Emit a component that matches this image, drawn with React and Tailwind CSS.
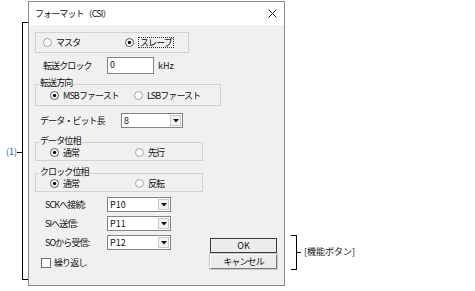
import React from "react";

function Radio({ checked }) {
  return (
    <svg width="9" height="9" viewBox="0 0 9 9" className="shrink-0">
      <circle cx="4.5" cy="4.5" r="4" fill="white" stroke={checked ? "#555" : "#a0a0a0"} strokeWidth="1" />
      {checked && <circle cx="4.5" cy="4.5" r="1.7" fill="#111" />}
    </svg>
  );
}

function RadioItem({ checked, label, focus, className = "" }) {
  return (
    <div className={"flex items-center gap-[4px] " + className}>
      <Radio checked={checked} />
      <span className={focus ? "border border-dotted border-[#333] px-[1px] leading-[9px]" : "leading-[9px]"}>{label}</span>
    </div>
  );
}

function Select({ value, className }) {
  return (
    <div className={"flex h-[15px] items-stretch border border-[#828282] bg-white " + className}>
      <span className="flex-1 pl-[2px] leading-[13px] tracking-normal">{value}</span>
      <div className="m-[1px] flex w-[11px] items-center justify-center border border-[#c8c8c8] bg-[#f3f3f3]">
        <svg width="6" height="4" viewBox="0 0 6 4">
          <path d="M0 0 H6 L3 3.5 Z" fill="#111" />
        </svg>
      </div>
    </div>
  );
}

function Group({ label, className, children }) {
  return (
    <div className={"relative border border-[#d2d2d2] " + className}>
      {label && (
        <span className="absolute -top-[7px] left-[3px] bg-[#f0f0f0] px-[1px] leading-[9px]">{label}</span>
      )}
      {children}
    </div>
  );
}

export default function App() {
  return (
    <div className="relative h-[291px] w-[475px] overflow-hidden bg-white font-['Noto_Sans_CJK_JP',sans-serif] text-[9px] tracking-[-0.9px] text-[#111]">
      {/* left bracket annotation */}
      <div className="absolute left-[22px] top-[22px] h-[258px] w-[7px] border-y border-l border-black" />
      <div className="absolute left-[17px] top-[152px] h-px w-[5px] bg-black" />
      <span className="absolute left-[6px] top-[147px] leading-[10px] tracking-normal text-[#0a5fb4]">(1)</span>

      {/* right bracket annotation */}
      <div className="absolute left-[291px] top-[235px] h-[35px] w-[6px] border-y border-r border-black" />
      <div className="absolute left-[296px] top-[252px] h-px w-[5px] bg-black" />
      <span className="absolute left-[304px] top-[247px] leading-[10px] tracking-normal text-[#111]">[機能ボタン]</span>

      {/* dialog window */}
      <div className="absolute left-[28px] top-[1px] flex h-[285px] w-[257px] flex-col border border-[#8a8a8a] bg-[#f0f0f0]">
        <div className="flex h-[23px] items-center justify-between bg-white pl-[6px] pr-[7px]">
          <span className="leading-[11px]">フォーマット（CSI）</span>
          <svg width="9" height="9" viewBox="0 0 9 9">
            <path d="M0.5 0.5 L8.5 8.5 M8.5 0.5 L0.5 8.5" stroke="#222" strokeWidth="1" />
          </svg>
        </div>

        <div className="flex flex-1 flex-col pl-[6px]">
          <Group label="" className="mt-[7px] flex h-[21px] w-[154px] items-center pl-[7px]">
            <RadioItem label="マスタ" className="w-[82px]" />
            <RadioItem checked focus label="スレーブ" />
          </Group>

          <div className="mt-[4px] flex h-[17px] items-center">
            <span className="ml-[8px] w-[64px] leading-[11px]">転送クロック</span>
            <div className="h-[17px] w-[47px] border border-[#828282] bg-white pl-[2px] leading-[14px]">0</div>
            <span className="ml-[4px] leading-[11px] tracking-normal">kHz</span>
          </div>

          <Group label="転送方向" className="mt-[10px] flex h-[22px] w-[186px] items-center pl-[14px] pt-[1px]">
            <RadioItem checked label="MSBファースト" className="w-[84px]" />
            <RadioItem label="LSBファースト" />
          </Group>

          <div className="mt-[7px] flex h-[15px] items-center">
            <span className="ml-[5px] w-[81px] leading-[11px]">データ・ビット長</span>
            <Select value="8" className="w-[62px]" />
          </div>

          <Group label="データ位相" className="mt-[14px] flex h-[19px] w-[168px] items-center pl-[14px] pt-[2px]">
            <RadioItem checked label="通常" className="w-[85px]" />
            <RadioItem label="先行" />
          </Group>

          <Group label="クロック位相" className="mt-[12px] flex h-[19px] w-[168px] items-center pl-[14px] pt-[2px]">
            <RadioItem checked label="通常" className="w-[85px]" />
            <RadioItem label="反転" />
          </Group>

          <div className="flex flex-1 items-start justify-between pr-[7px]">
            <div className="flex flex-col">
              <div className="mt-[5px] flex h-[15px] items-center">
                <span className="ml-[10px] w-[62px] leading-[11px]">SCKへ接続:</span>
                <Select value="P10" className="w-[64px]" />
              </div>
              <div className="mt-[4px] flex h-[15px] items-center">
                <span className="ml-[10px] w-[62px] leading-[11px]">SIへ送信:</span>
                <Select value="P11" className="w-[64px]" />
              </div>
              <div className="mt-[4px] flex h-[15px] items-center">
                <span className="ml-[10px] w-[62px] leading-[11px]">SOから受信:</span>
                <Select value="P12" className="w-[64px]" />
              </div>
              <div className="mt-[7px] flex items-center gap-[3px] pl-[6px]">
                <div className="h-[10px] w-[10px] border border-[#6d6d6d] bg-white" />
                <span className="leading-[11px]">繰り返し</span>
              </div>
            </div>
            <div className="mt-[46px] flex flex-col gap-[1px]">
              <div className="flex h-[15px] w-[67px] items-center justify-center border border-[#3a3a3a] bg-[#ececec] leading-[11px] tracking-normal">
                OK
              </div>
              <div className="flex h-[15px] w-[67px] items-center justify-center border border-b-[#7a7a7a] border-l-white border-r-[#7a7a7a] border-t-white bg-[#ececec] leading-[11px] shadow-[0_0_0_1px_#c8c8c8]">
                キャンセル
              </div>
            </div>
          </div>
        </div>
      </div>
    </div>
  );
}
